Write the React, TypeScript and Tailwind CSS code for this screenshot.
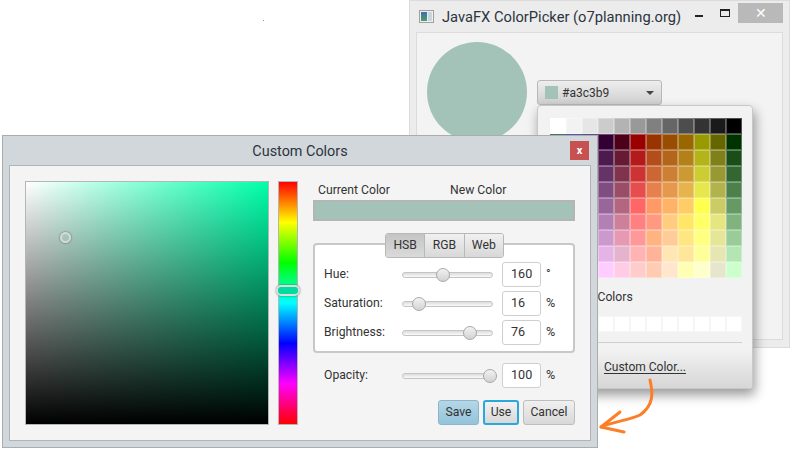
import type { ReactNode } from "react";

const PALETTE = [
  "255,255,255", "242,242,242", "230,230,230", "204,204,204", "179,179,179", "153,153,153", "128,128,128", "102,102,102", "77,77,77", "51,51,51", "26,26,26", "0,0,0",
  "0,51,51", "0,26,128", "26,0,104", "51,0,51", "77,0,26", "153,0,0", "153,51,0", "153,77,0", "153,102,0", "153,153,0", "102,102,0", "0,51,0",
  "26,77,77", "26,51,153", "51,26,128", "77,26,77", "102,26,51", "179,26,26", "179,77,26", "179,102,26", "179,128,26", "179,179,26", "128,128,26", "26,77,26",
  "51,102,102", "51,77,179", "77,51,153", "102,51,102", "128,51,77", "204,51,51", "204,102,51", "204,128,51", "204,153,51", "204,204,51", "153,153,51", "51,102,51",
  "77,128,128", "77,102,204", "102,77,179", "128,77,128", "153,77,102", "230,77,77", "230,128,77", "230,153,77", "230,179,77", "230,230,77", "179,179,77", "77,128,77",
  "102,153,153", "102,128,230", "128,102,204", "153,102,153", "179,102,128", "255,102,102", "255,153,102", "255,179,102", "255,204,102", "255,255,77", "204,204,102", "102,153,102",
  "128,179,179", "128,153,255", "153,128,230", "179,128,179", "204,128,153", "255,128,128", "255,153,128", "255,204,128", "255,230,102", "255,255,102", "230,230,128", "128,179,128",
  "153,204,204", "153,179,255", "179,153,255", "204,153,204", "230,153,179", "255,153,153", "255,179,128", "255,204,153", "255,230,128", "255,255,128", "230,230,153", "153,204,153",
  "179,230,230", "179,204,255", "204,179,255", "230,179,230", "230,179,204", "255,179,179", "255,179,153", "255,230,179", "255,230,153", "255,255,153", "230,230,179", "179,230,179",
  "204,255,255", "204,230,255", "230,204,255", "255,204,255", "255,204,230", "255,204,204", "255,204,179", "255,230,204", "255,255,179", "255,255,204", "230,230,204", "204,255,204",
];

const SLIDERS = [
  { label: "Hue:", thumb: 40, value: "160", unit: "°" },
  { label: "Saturation:", thumb: 16, value: "16", unit: "%" },
  { label: "Brightness:", thumb: 67, value: "76", unit: "%" },
];

function SliderRow({ label, thumb, value, unit }: { label: string; thumb: number; value: string; unit: string }) {
  return (
    <div className="flex h-[25px] items-center">
      <span className="w-[78px] text-[12.2px] text-[#333]">{label}</span>
      <div className="relative h-[6px] w-[91px] rounded-full border border-[#c4c4c4] bg-gradient-to-b from-[#dcdcdc] to-[#fafafa]">
        <div
          className="absolute top-[-5px] h-[14px] w-[14px] -translate-x-1/2 rounded-full border border-[#a8a8a8] bg-gradient-to-b from-[#f2f2f2] to-[#d2d2d2]"
          style={{ left: thumb }}
        />
      </div>
      <div className="ml-[9px] flex h-[25px] w-[39px] items-center rounded-[3px] border border-[#cfcfcf] bg-white pl-[8px] text-[12.6px] text-[#333]">
        {value}
      </div>
      <span className="ml-[5px] text-[12.6px] text-[#333]">{unit}</span>
    </div>
  );
}

function Tab({ children, active }: { children: ReactNode; active?: boolean }) {
  return (
    <div
      className={
        active
          ? "flex h-full flex-1 items-center justify-center bg-gradient-to-b from-[#c4c4c4] to-[#dadada] text-[12.2px] text-[#333]"
          : "flex h-full flex-1 items-center justify-center border-l border-[#b8b8b8] bg-gradient-to-b from-[#f0f0f0] to-[#d8d8d8] text-[12.2px] text-[#333]"
      }
    >
      {children}
    </div>
  );
}

function BackWindow() {
  return (
    <div className="absolute left-[409px] top-0 flex h-[348px] w-[381px] flex-col border border-[#dcdcdc] bg-[#ececec]">
      <div className="flex h-[31px] shrink-0 items-start">
        <svg className="ml-[9px] mt-[9px] shrink-0" width="15" height="13" viewBox="0 0 15 13">
          <defs>
            <linearGradient id="winIcon" x1="0" y1="0" x2="0" y2="1">
              <stop offset="0" stopColor="#3f6fa8" />
              <stop offset="1" stopColor="#4f9c6c" />
            </linearGradient>
          </defs>
          <rect x="0.5" y="0.5" width="14" height="12" fill="#f0f0f0" stroke="#a0a0a0" />
          <rect x="2" y="2" width="6" height="9" fill="url(#winIcon)" />
          <rect x="9" y="2" width="4" height="9" fill="#c9d6dc" />
        </svg>
        <span className="ml-[8px] mt-[4px] whitespace-nowrap text-[14.7px] leading-[24px] text-[#2b3440]">JavaFX ColorPicker (o7planning.org)</span>
        <div className="ml-auto flex">
          <div className="mr-[17px] mt-[14px] h-[2px] w-[8px] bg-[#222]" />
          <div className="mr-[8px] mt-[8px] h-[8px] w-[10px] border border-t-2 border-[#222]" />
          <div className="mr-[6px] mt-[2px] flex h-[20px] w-[45px] items-center justify-center bg-[#b9b9b9] text-[14px] leading-none text-white">✕</div>
        </div>
      </div>
      <div className="mx-[6px] mb-[7px] flex min-h-0 flex-1 items-start border border-[#dcdcdc] bg-[#f3f3f3] pl-[10px] pt-[9px]">
        <div className="h-[100px] w-[100px] shrink-0 rounded-full bg-[#a3c3b9]" />
        <div className="ml-[10px] mt-[38px] flex h-[25px] w-[125px] items-center rounded-[3px] border border-[#b8b8b8] bg-gradient-to-b from-[#eeeeee] to-[#cfcfcf] pl-[7px]">
          <div className="h-[13px] w-[13px] bg-[#a3c3b9]" />
          <span className="ml-[4px] text-[12px] text-[#333]">#a3c3b9</span>
          <div className="ml-auto mr-[7px] h-0 w-0 border-x-[4px] border-t-[4px] border-x-transparent border-t-[#444]" />
        </div>
      </div>
    </div>
  );
}

function Popup() {
  return (
    <div className="absolute left-[537px] top-[105px] flex h-[284px] w-[216px] flex-col rounded-[4px] border border-[#c8c8c8] bg-[#f2f2f2] shadow-[2px_6px_12px_rgba(0,0,0,0.4)]">
      <div className="ml-[12px] mt-[12px] grid w-[192px] grid-cols-[repeat(12,16px)] grid-rows-[repeat(10,16px)]">
        {PALETTE.map((rgb, i) => (
          <div key={i} className="border border-[rgba(255,255,255,0.3)]" style={{ backgroundColor: `rgb(${rgb})` }} />
        ))}
      </div>
      <div className="ml-[14px] mt-[11px] whitespace-nowrap text-[12.2px] leading-[16px] text-[#333]">Custom Colors</div>
      <div className="ml-[12px] mt-[11px] grid w-[192px] grid-cols-[repeat(12,16px)]">
        {Array.from({ length: 12 }, (_, i) => (
          <div key={i} className="h-[16px] border border-[#f6f6f6] bg-white" />
        ))}
      </div>
      <div className="ml-[12px] mt-[10px] h-px w-[192px] bg-[#cfcfcf]" />
      <div className="mt-[7px] flex min-h-0 flex-1 items-center justify-center rounded-b-[4px] bg-gradient-to-b from-[#f2f2f2] to-[#d6d6d6] pb-[5px]">
        <span className="text-[12px] text-[#333] underline underline-offset-2">Custom Color...</span>
      </div>
    </div>
  );
}

function Dialog() {
  return (
    <div className="absolute left-[2px] top-[135px] flex h-[313px] w-[596px] flex-col border border-[#a8adb0] bg-[#d2d7db]">
      <div className="relative flex h-[29px] shrink-0 items-center justify-center pt-[2px]">
        <span className="text-[14.4px] text-[#2b3440]">Custom Colors</span>
        <div className="absolute right-[8px] top-[5px] flex h-[19px] w-[19px] items-center justify-center bg-[#c75050] text-[11px] font-bold leading-none text-white">x</div>
      </div>
      <div className="mx-[6px] mb-[6px] flex min-h-0 flex-1 border border-[#b0b4b6] bg-[#f4f4f4] pl-[15px] pt-[15px]">
        <div className="relative h-[244px] w-[244px] shrink-0 border border-[#b5b5b5] bg-[linear-gradient(to_bottom,rgba(0,0,0,0),#000),linear-gradient(to_right,#fff,#00ffaa)]">
          <div className="absolute left-[34px] top-[50px] h-[11px] w-[11px] rounded-full border-2 border-[#d8d8d8] shadow-[0_0_2px_rgba(0,0,0,0.6)]" />
        </div>
        <div className="relative ml-[9px] h-[244px] w-[20px] shrink-0 border border-[#b5b5b5] bg-[linear-gradient(to_bottom,#f00,#ff0_16.7%,#0f0_33.3%,#0ff_50%,#00f_66.7%,#f0f_83.3%,#f00)]">
          <div className="absolute left-[-3px] top-[103px] h-[11px] w-[24px] rounded-[5px] border-2 border-[#dcdcdc] bg-[#00dca0] shadow-[0_0_2px_rgba(0,0,0,0.5)]" />
        </div>
        <div className="ml-[15px] flex w-[262px] flex-col">
          <div className="flex h-[19px] items-center pl-[5px] text-[12.2px] text-[#333]">
            <span className="w-[132px]">Current Color</span>
            <span>New Color</span>
          </div>
          <div className="h-[21px] border-2 border-[#b5b5b5] bg-[#a3c3b9]" />
          <div className="relative mt-[22px] h-[110px] rounded-[4px] border-2 border-[#c8c8c8] bg-white pl-[9px] pt-[17px]">
            <div className="absolute left-[70px] top-[-12px] flex h-[25px] w-[119px] overflow-hidden rounded-[3px] border border-[#b8b8b8]">
              <Tab active>HSB</Tab>
              <Tab>RGB</Tab>
              <Tab>Web</Tab>
            </div>
            <div className="flex flex-col gap-[4px]">
              {SLIDERS.map((s) => (
                <SliderRow key={s.label} {...s} />
              ))}
            </div>
          </div>
          <div className="mt-[10px] pl-[11px]">
            <SliderRow label="Opacity:" thumb={87} value="100" unit="%" />
          </div>
          <div className="mt-[12px] flex justify-end gap-[4px]">
            <div className="flex h-[25px] w-[41px] items-center justify-center rounded-[3px] border border-[#8fb4c6] bg-gradient-to-b from-[#b4d7e8] to-[#93c4db] text-[12.2px] text-[#333]">Save</div>
            <div className="flex h-[25px] w-[36px] items-center justify-center rounded-[3px] border-2 border-[#2aa8dc] bg-gradient-to-b from-[#f2f2f2] to-[#d8d8d8] text-[12.2px] text-[#333]">Use</div>
            <div className="flex h-[25px] w-[52px] items-center justify-center rounded-[3px] border border-[#bdbdbd] bg-gradient-to-b from-[#f0f0f0] to-[#d8d8d8] text-[12.2px] text-[#333]">Cancel</div>
          </div>
        </div>
      </div>
    </div>
  );
}

export default function App() {
  return (
    <div className="relative h-[452px] w-[792px] overflow-hidden bg-white font-['Roboto','Open_Sans',sans-serif]">
      <div className="absolute left-[263px] top-[20px] h-px w-px bg-[#999]" />
      <BackWindow />
      <Popup />
      <Dialog />
      {/* hand drawn arrow pointing at the dialog */}
      <svg className="absolute left-[595px] top-[375px]" width="70" height="70" viewBox="0 0 70 70" fill="none" stroke="#fd7e26" strokeWidth="3" strokeLinecap="round" strokeLinejoin="round">
        <path d="M55 5 C58 18 59 30 45 40 C35 45 20 46 6 52" />
        <path d="M25 37 L6 52 L29 57" />
      </svg>
    </div>
  );
}
